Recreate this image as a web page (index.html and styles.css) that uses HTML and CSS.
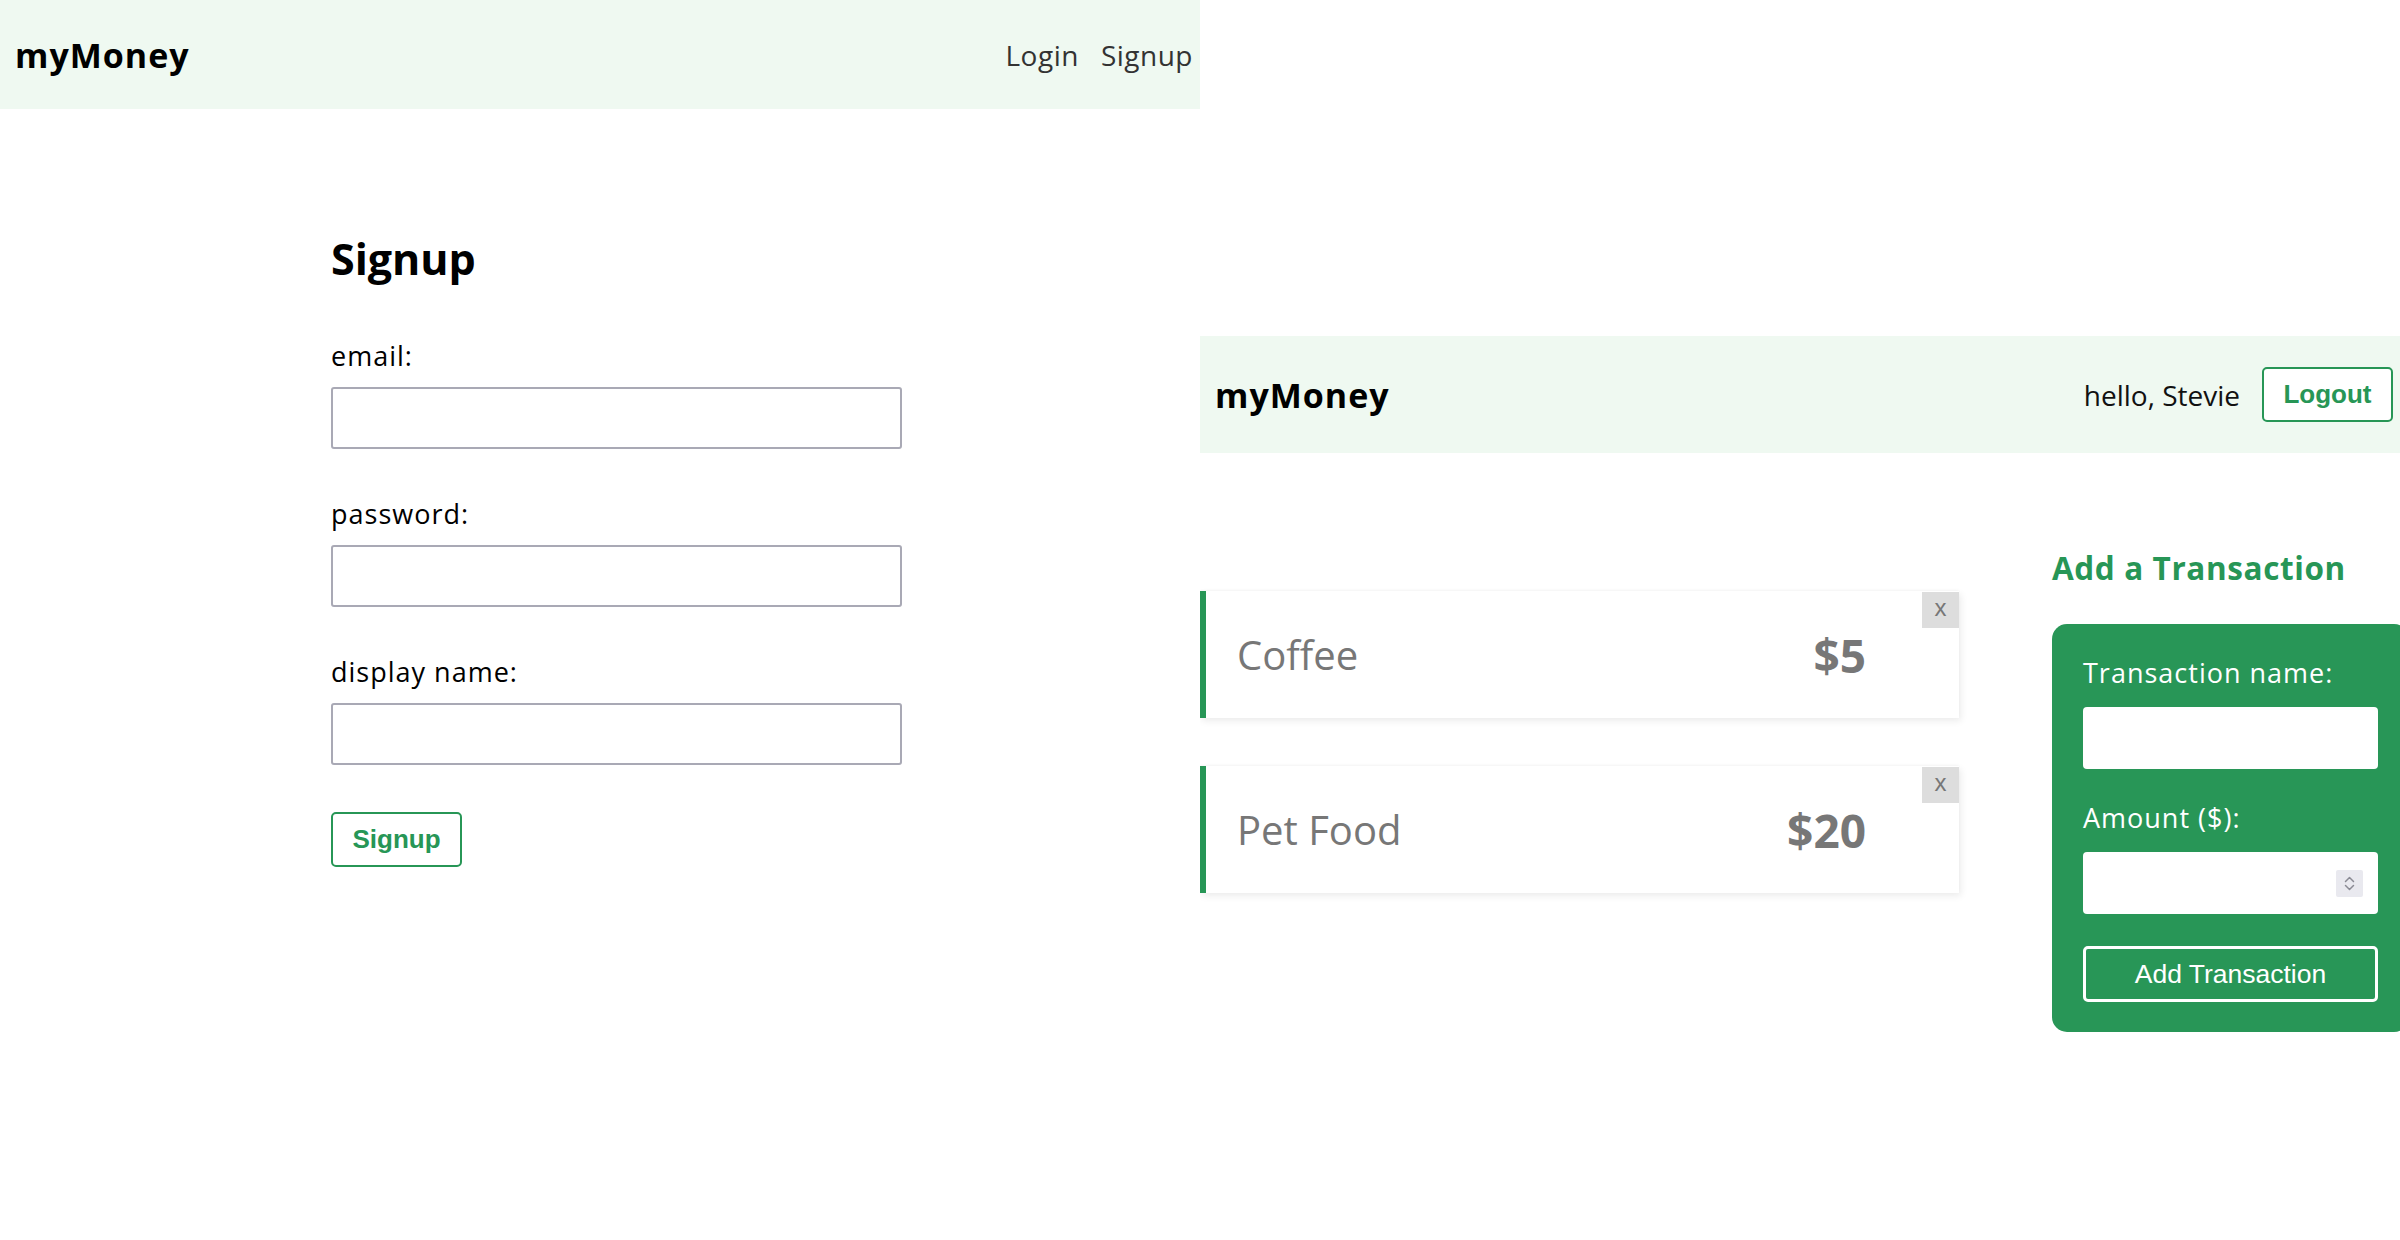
FILE: index.html
```html
<!DOCTYPE html>
<html lang="en">
<head>
<meta charset="utf-8">
<title>myMoney</title>
<link rel="stylesheet" href="styles.css">
</head>
<body>
<div class="page">
  <section class="screen screen-signup">
    <nav class="navbar">
      <span class="logo">myMoney</span>
      <ul class="links">
        <li>Login</li>
        <li>Signup</li>
      </ul>
    </nav>
    <form class="auth-form">
      <h2 class="auth-title">Signup</h2>
      <label class="field">
        <span class="field-label">email:</span>
        <input class="field-input" type="text">
      </label>
      <label class="field">
        <span class="field-label">password:</span>
        <input class="field-input" type="text">
      </label>
      <label class="field">
        <span class="field-label">display name:</span>
        <input class="field-input" type="text">
      </label>
      <button class="btn" type="button">Signup</button>
    </form>
  </section>

  <section class="screen screen-home">
    <nav class="navbar">
      <span class="logo">myMoney</span>
      <div class="links">
        <span class="greeting">hello, Stevie</span>
        <button class="btn" type="button">Logout</button>
      </div>
    </nav>
    <div class="home">
      <ul class="transactions">
        <li class="txn">
          <p class="txn-name">Coffee</p>
          <p class="txn-amount">$5</p>
          <button class="txn-remove" type="button">x</button>
        </li>
        <li class="txn">
          <p class="txn-name">Pet Food</p>
          <p class="txn-amount">$20</p>
          <button class="txn-remove" type="button">x</button>
        </li>
      </ul>
      <aside class="sidebar">
        <h3 class="sidebar-title">Add a Transaction</h3>
        <form class="txn-form">
          <label class="tf-field">
            <span class="tf-label">Transaction name:</span>
            <span class="tf-box"><input class="tf-input" type="text"></span>
          </label>
          <label class="tf-field">
            <span class="tf-label">Amount ($):</span>
            <span class="tf-box">
              <input class="tf-input" type="text">
              <svg class="spinner" width="27" height="27" viewBox="0 0 27 27">
                <rect width="27" height="27" rx="2" fill="#e9e9ef"/>
                <path d="M9.5 11.5 L13.5 7.5 L17.5 11.5" fill="none" stroke="#8a8a94" stroke-width="1.5" stroke-linecap="round" stroke-linejoin="round"/>
                <path d="M9.5 15.5 L13.5 19.5 L17.5 15.5" fill="none" stroke="#8a8a94" stroke-width="1.5" stroke-linecap="round" stroke-linejoin="round"/>
              </svg>
            </span>
          </label>
          <button class="tf-submit" type="button">Add Transaction</button>
        </form>
      </aside>
    </div>
  </section>
</div>
</body>
</html>
```

FILE: styles.css
```css
* {
  box-sizing: border-box;
}

body {
  margin: 0;
  background: #ffffff;
  font-family: "Open Sans", "Noto Sans", sans-serif;
  color: #000;
}

.page {
  display: flex;
  width: 2400px;
  height: 1240px;
  overflow: hidden;
}

.screen {
  width: 1200px;
  flex-shrink: 0;
}

.screen-home {
  padding-top: 336px;
  overflow: hidden;
}

/* Navbar */
.navbar {
  display: flex;
  align-items: center;
  justify-content: space-between;
  height: 109px;
  padding: 0 7px 0 15px;
  background: #eff9f1;
}

.screen-home .navbar {
  height: 117px;
}

.logo {
  font-size: 34px;
  font-weight: 700;
  line-height: 40px;
  letter-spacing: 1px;
}

.links {
  display: flex;
  align-items: center;
  gap: 22px;
  margin: 0;
  padding: 0;
  list-style: none;
  font-size: 28px;
  line-height: 34px;
  letter-spacing: 0.5px;
  color: #333;
}

.greeting {
  color: #111;
  letter-spacing: 0;
}

.btn {
  height: 55px;
  padding: 0 20px;
  border: 2px solid #279656;
  border-radius: 5px;
  background: #fff;
  color: #279656;
  font-family: "Liberation Sans", Arial, sans-serif;
  font-weight: 700;
  font-size: 26px;
  letter-spacing: 0;
  cursor: pointer;
}

.links .btn {
  width: 131px;
  padding: 0;
}

/* Signup form */
.auth-form {
  width: 571px;
  margin: 123px 0 0 331px;
}

.auth-title {
  margin: 0 0 53px;
  font-size: 43px;
  line-height: 54px;
  font-weight: 700;
}

.field {
  display: block;
  margin-bottom: 48px;
}

.field-label {
  display: block;
  margin-bottom: 14px;
  font-size: 27px;
  line-height: 34px;
  letter-spacing: 1px;
}

.field-input {
  display: block;
  width: 100%;
  height: 62px;
  border: 2px solid #a9a9b5;
  border-radius: 3px;
  background: #fff;
}

.auth-form .btn {
  width: 131px;
  padding: 0;
  margin-top: -1px;
}

/* Home */
.home {
  display: flex;
  align-items: flex-start;
  gap: 93px;
}

.transactions {
  width: 759px;
  flex-shrink: 0;
  margin: 138px 0 0;
  padding: 0;
  list-style: none;
}

.txn {
  position: relative;
  display: flex;
  align-items: center;
  justify-content: space-between;
  height: 127px;
  margin-bottom: 48px;
  padding: 0 93px 0 31px;
  background: #fff;
  border-left: 6px solid #279656;
  box-shadow: 2px 3px 7px rgba(0, 0, 0, 0.08), 0 -1px 2px rgba(0, 0, 0, 0.03);
}

.txn-name {
  margin: 0;
  font-size: 40px;
  line-height: 48px;
  color: #777;
}

.txn-amount {
  margin: 0;
  font-size: 46px;
  line-height: 54px;
  font-weight: 700;
  color: #777;
}

.txn-remove {
  position: absolute;
  top: 1px;
  right: 0;
  width: 37px;
  height: 36px;
  padding: 0 0 4px;
  border: none;
  background: #ddd;
  color: #777;
  font-family: "Liberation Sans", Arial, sans-serif;
  font-size: 24px;
}

.sidebar {
  width: 357px;
  flex-shrink: 0;
  margin-top: 96px;
}

.sidebar-title {
  margin: 0 0 37px;
  font-size: 31.5px;
  line-height: 38px;
  font-weight: 700;
  letter-spacing: 0.6px;
  color: #279656;
}

.txn-form {
  padding: 32px 31px 30px;
  border-radius: 15px;
  background: #289657;
}

.tf-field {
  display: block;
  margin-bottom: 32px;
}

.tf-label {
  display: block;
  margin-bottom: 17px;
  font-size: 27px;
  line-height: 34px;
  letter-spacing: 1px;
  color: #fff;
}

.tf-box {
  display: flex;
  align-items: center;
  height: 62px;
  padding-right: 15px;
  border-radius: 4px;
  background: #fff;
}

.tf-input {
  flex: 1;
  min-width: 0;
  height: 100%;
  border: none;
  background: transparent;
  outline: none;
}

.spinner {
  flex-shrink: 0;
  display: block;
}

.tf-submit {
  display: block;
  width: 100%;
  height: 56px;
  border: 3px solid #fff;
  border-radius: 5px;
  background: transparent;
  color: #fff;
  font-family: "Liberation Sans", Arial, sans-serif;
  font-size: 26.5px;
}
```
